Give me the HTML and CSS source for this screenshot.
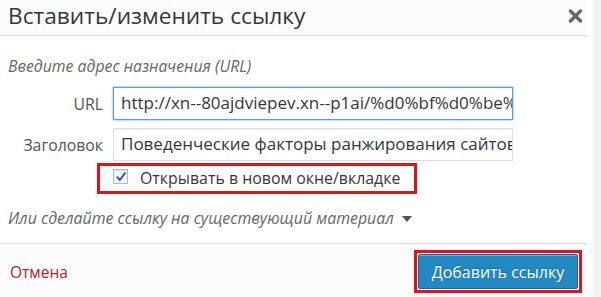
FILE: index.html
```html
<!DOCTYPE html>
<html lang="ru">
<head>
<meta charset="utf-8">
<title>Вставить/изменить ссылку</title>
<link rel="stylesheet" href="styles.css">
</head>
<body>
<div class="dialog">
  <div class="header">
    <h1 class="title">Вставить/изменить ссылку</h1>
    <svg class="close" width="15" height="14" viewBox="0 0 15 14" aria-label="Закрыть">
      <path d="M2.5 2 L12.5 12 M12.5 2 L2.5 12" stroke="#666" stroke-width="3.4" stroke-linecap="round" fill="none"/>
    </svg>
  </div>
  <div class="body">
    <p class="hint">Введите адрес назначения (URL)</p>
    <div class="fields">
      <label class="label">URL</label>
      <div class="input focused">http://xn--80ajdviepev.xn--p1ai/%d0%bf%d0%be%d0%b2</div>
      <label class="label">Заголовок</label>
      <div class="input">Поведенческие факторы ранжирования сайтов</div>
    </div>
    <div class="mark check-row">
      <span class="checkbox">
        <svg width="12" height="12" viewBox="0 0 12 12"><path d="M2.2 6.2 L4.8 9 L10 2.2" stroke="#1e5aa8" stroke-width="1.9" fill="none" stroke-linecap="round" stroke-linejoin="round"/></svg>
      </span>
      <span class="check-label">Открывать в новом окне/вкладке</span>
    </div>
    <p class="existing">Или сделайте ссылку на существующий материал
      <svg class="caret" width="10" height="6" viewBox="0 0 10 6"><path d="M0 0 H10 L5 6 Z" fill="#555"/></svg>
    </p>
  </div>
  <div class="footer">
    <span class="cancel">Отмена</span>
    <div class="mark button-mark">
      <span class="button">Добавить ссылку</span>
    </div>
  </div>
</div>
</body>
</html>
```

FILE: styles.css
```css
html, body {
  margin: 0;
  padding: 0;
}
body {
  background: #f3f3f3;
  font-family: "Open Sans", "Noto Sans", "DejaVu Sans", sans-serif;
  width: 601px;
  height: 297px;
  overflow: hidden;
}
.dialog {
  width: 587px;
  height: 297px;
  padding-right: 6px;
  background: #fff;
  display: flex;
  flex-direction: column;
}
.header {
  height: 35px;
  border-bottom: 1px solid #dedede;
  background: #fcfcfc;
  display: flex;
  justify-content: space-between;
  align-items: flex-start;
  padding-left: 8px;
}
.title {
  margin: 0;
  font-size: 22.7px;
  font-weight: 400;
  line-height: 31px;
  color: #32373c;
}
.close {
  margin-top: 9px;
  margin-right: 4px;
}
.body {
  flex: 1;
  padding: 20px 8px 0 8px;
  display: flex;
  flex-direction: column;
  align-items: flex-start;
}
.hint {
  margin: 0 0 11px 0;
  font-size: 15.8px;
  line-height: 20px;
  font-style: italic;
  color: #666;
}
.fields {
  display: grid;
  grid-template-columns: 95px 400px;
  column-gap: 10px;
  row-gap: 8px;
  align-items: center;
}
.label {
  text-align: right;
  font-size: 15.8px;
  color: #555;
  line-height: 20px;
}
.input {
  box-sizing: border-box;
  height: 33px;
  border: 1px solid #ddd;
  box-shadow: inset 0 1px 2px rgba(0, 0, 0, 0.07);
  padding: 0 0 0 7px;
  font-size: 17px;
  line-height: 30px;
  color: #32373c;
  white-space: nowrap;
  overflow: hidden;
}
.input.focused {
  border-color: #5b9dd9;
  box-shadow: 0 0 2px rgba(30, 140, 190, 0.8);
}
.mark {
  border: 3px solid #e3101d;
}
.check-row {
  box-sizing: border-box;
  width: 320px;
  height: 31px;
  margin: 2px 0 0 89px;
  display: flex;
  align-items: center;
  padding: 0 0 2px 13px;
}
.checkbox {
  box-sizing: border-box;
  width: 15px;
  height: 15px;
  border: 1px solid #b4b9be;
  background: #f7f7f7;
  box-shadow: inset 0 1px 2px rgba(0, 0, 0, 0.1);
  display: flex;
  align-items: center;
  justify-content: center;
  margin-top: -2px;
}
.check-label {
  margin-left: 12px;
  font-size: 15.9px;
  color: #32373c;
  line-height: 20px;
}
.existing {
  margin: 14px 0 0 0;
  font-size: 15.9px;
  line-height: 20px;
  font-style: italic;
  color: #666;
  display: flex;
  align-items: center;
}
.caret {
  margin-left: 8px;
  margin-top: 1px;
}
.footer {
  height: 53px;
  border-top: 1px solid #dedede;
  background: #fcfcfc;
  display: flex;
  justify-content: space-between;
  align-items: flex-start;
  padding: 0 5px 0 10px;
}
.cancel {
  margin-top: 18px;
  font-size: 15.5px;
  line-height: 20px;
  color: #b3232c;
}
.button-mark {
  margin-top: 6px;
  padding: 1px;
  background: #fff;
}
.button {
  box-sizing: border-box;
  display: flex;
  align-items: center;
  justify-content: center;
  width: 160px;
  height: 35px;
  background: #2389c2;
  border: 1px solid #156a9c;
  border-radius: 2px;
  box-shadow: inset 0 1px 0 rgba(140, 200, 230, 0.6);
  color: #fff;
  font-size: 16px;
  text-shadow: 0 -1px 1px rgba(0, 60, 100, 0.4);
}
```
